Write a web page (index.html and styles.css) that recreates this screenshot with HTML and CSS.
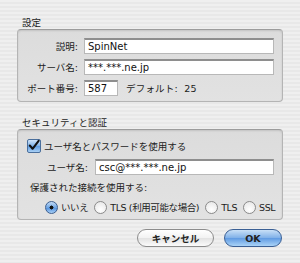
FILE: index.html
```html
<!DOCTYPE html>
<html lang="ja">
<head>
    <meta charset="UTF-8">
    <meta name="viewport" content="width=device-width, initial-scale=1.0">
    <title>アカウント設定</title>
    <link rel="stylesheet" href="styles.css">
</head>
<body>
    <div class="dialog">
        <div class="group-title">設定</div>
        <div class="group">
            <div class="row">
                <label class="lbl">説明:</label>
                <input class="field" type="text" value="SpinNet">
            </div>
            <div class="row">
                <label class="lbl">サーバ名:</label>
                <input class="field" type="text" value="***.***.ne.jp">
            </div>
            <div class="row">
                <label class="lbl">ポート番号:</label>
                <input class="field port" type="text" value="587">
                <span class="default">デフォルト:&nbsp;&nbsp;25</span>
            </div>
        </div>

        <div class="group-title second">セキュリティと認証</div>
        <div class="group security">
            <div class="check-row">
                <span class="checkbox">
                    <svg width="14" height="14" viewBox="0 0 14 14">
                        <path d="M3 6.5 L6 10 L12.5 1.5" fill="none" stroke="#111" stroke-width="2.2" stroke-linecap="round" stroke-linejoin="round"/>
                    </svg>
                </span>
                <span>ユーザ名とパスワードを使用する</span>
            </div>
            <div class="row user-row">
                <label class="lbl user-lbl">ユーザ名:</label>
                <input class="field" type="text" value="csc@***.***.ne.jp">
            </div>
            <div class="prompt">保護された接続を使用する:</div>
            <div class="radios">
                <span class="radio on"></span><span class="opt">いいえ</span>
                <span class="radio"></span><span class="opt">TLS (利用可能な場合)</span>
                <span class="radio"></span><span class="opt">TLS</span>
                <span class="radio"></span><span class="opt">SSL</span>
            </div>
        </div>

        <div class="buttons">
            <button class="btn cancel">キャンセル</button>
            <button class="btn ok">OK</button>
        </div>
    </div>
</body>
</html>
```

FILE: styles.css
```css
html, body {
    margin: 0;
    padding: 0;
    height: 100%;
}

body {
    font-family: "DejaVu Sans", "Noto Sans CJK JP", sans-serif;
    font-size: 9.5px;
    color: #1c1c1c;
    background: repeating-linear-gradient(#efefef 0 2px, #e8e8e8 2px 4px);
}

.dialog {
    padding: 0 17px;
}

/* group titles and boxes */
.group-title {
    height: 12px;
    line-height: 12px;
    padding-left: 5px;
    margin-top: 17px;
}

.group-title.second {
    margin-top: 15px;
}

.group {
    border: 1px solid #b4b4b4;
    border-top-color: #9c9c9c;
    border-radius: 4px;
    background: linear-gradient(#dcdcdc, #e2e2e2);
    box-shadow: inset 0 1px 2px rgba(0, 0, 0, 0.12);
    padding: 8px 8px 5px 0;
}

.row {
    display: flex;
    align-items: center;
    height: 16px;
    margin-bottom: 5px;
}

.row:last-child {
    margin-bottom: 0;
}

.lbl {
    width: 60px;
    text-align: right;
    margin-right: 6px;
    flex-shrink: 0;
}

.field {
    flex: 1;
    height: 16px;
    box-sizing: border-box;
    margin: 0;
    padding: 0 3px;
    border: 1px solid #b8b8b8;
    border-top: 2px solid #8e8e8e;
    background: #fff;
    font-family: "DejaVu Sans", "Noto Sans CJK JP", sans-serif;
    font-size: 10px;
    color: #111;
    outline: none;
}

.field.port {
    flex: none;
    width: 34px;
}

.default {
    margin-left: 8px;
    letter-spacing: 0.2px;
}

/* security section */
.security {
    padding-top: 9px;
    padding-bottom: 5px;
}

.check-row {
    display: flex;
    align-items: center;
    height: 14px;
    padding-left: 9px;
}

.checkbox {
    width: 14px;
    height: 14px;
    box-sizing: border-box;
    border: 1px solid #4a6f9c;
    border-radius: 2px;
    background: linear-gradient(#cfe3f8, #7fb1e6 50%, #5c9ae0 51%, #a9d0f5);
    margin-right: 3px;
    display: flex;
}

.checkbox svg {
    margin: -1px 0 0 -1px;
}

.user-row {
    margin-top: 6px;
}

.user-lbl {
    width: 70px;
    margin-right: 7px;
}

.prompt {
    height: 12px;
    line-height: 12px;
    margin-top: 7px;
    padding-left: 12px;
}

.radios {
    display: flex;
    align-items: center;
    height: 14px;
    margin-top: 6px;
    padding-left: 27px;
    white-space: nowrap;
}

.radio {
    width: 13px;
    height: 13px;
    box-sizing: border-box;
    border-radius: 50%;
    border: 1px solid #8a8a8a;
    background: radial-gradient(circle at 50% 70%, #ffffff, #e4e4e4);
    margin-right: 3px;
    flex-shrink: 0;
}

.radio.on {
    border-color: #3d5f8f;
    background: radial-gradient(circle, #111 0 1.8px, transparent 2.2px),
                linear-gradient(#c4dcf6, #6fa6e4 50%, #4d8ddc 51%, #a8d0f6);
}

.opt {
    margin-right: 6px;
    flex-shrink: 0;
    letter-spacing: -0.4px;
}

.opt:last-child {
    margin-right: 0;
}

/* buttons */
.buttons {
    display: flex;
    justify-content: flex-end;
    gap: 10px;
    margin-top: 9px;
    padding-right: 1px;
}

.btn {
    height: 18px;
    border-radius: 9px;
    font-family: "DejaVu Sans", "Noto Sans CJK JP", sans-serif;
    font-size: 9.5px;
    font-weight: bold;
    color: #222;
    padding: 0;
    cursor: pointer;
}

.cancel {
    width: 77px;
    border: 1px solid #8c8c8c;
    background: linear-gradient(#ffffff, #f2f2f2 50%, #e2e2e2 51%, #fbfbfb);
}

.ok {
    width: 58px;
    border: 1px solid #3a5f94;
    background: linear-gradient(#c9e0f7, #7fb0e8 50%, #5f9ae2 51%, #aad3f7);
}
```
